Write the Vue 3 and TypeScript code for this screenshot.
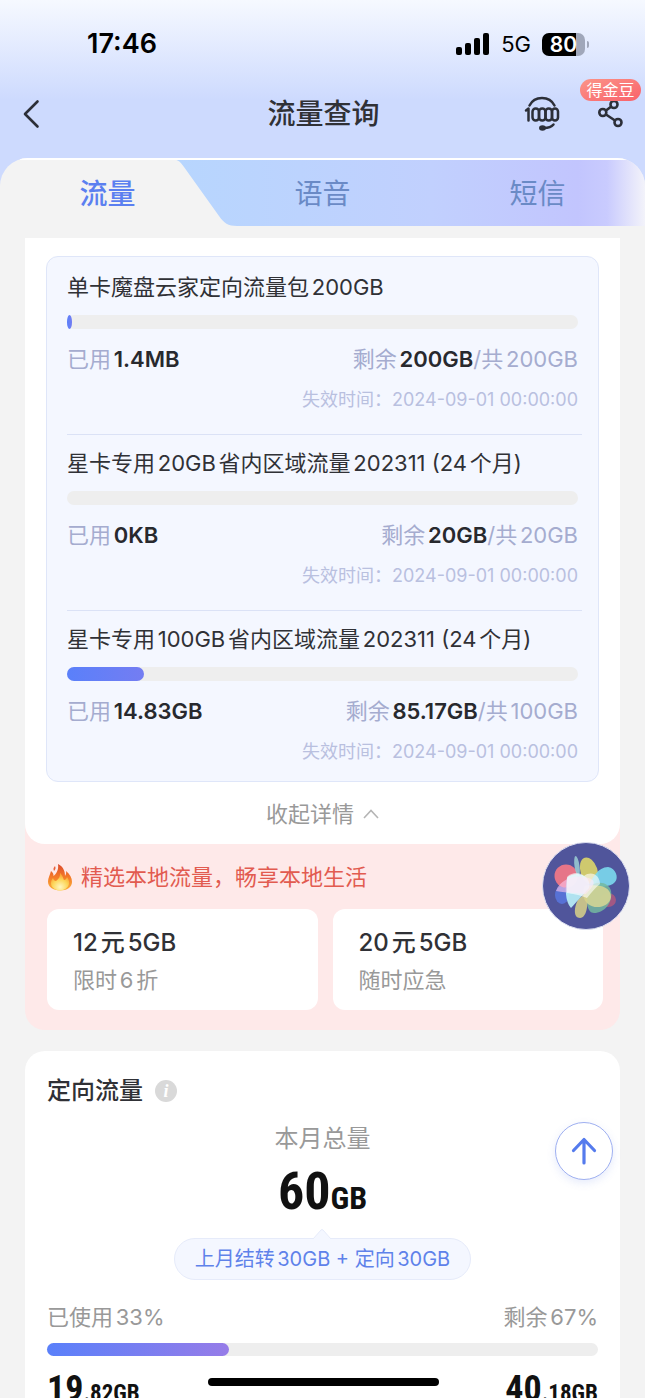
<script setup lang="ts">
interface DataPackage {
  name: string
  used: string
  left: string
  total: string
  expires: string
  percent: number
}

interface Offer {
  title: string
  note: string
}

const packages: DataPackage[] = [
  { name: '单卡魔盘云家定向流量包200GB', used: '1.4MB', left: '200GB', total: '200GB', expires: '2024-09-01 00:00:00', percent: 1 },
  { name: '星卡专用20GB省内区域流量202311 (24个月)', used: '0KB', left: '20GB', total: '20GB', expires: '2024-09-01 00:00:00', percent: 0 },
  { name: '星卡专用100GB省内区域流量202311 (24个月)', used: '14.83GB', left: '85.17GB', total: '100GB', expires: '2024-09-01 00:00:00', percent: 15 },
]

const offers: Offer[] = [
  { title: '12元5GB', note: '限时6折' },
  { title: '20元5GB', note: '随时应急' },
]
</script>

<template>
  <div class="app">
    <div class="status">
      <span class="clock">17:46</span>
      <div class="status-right">
        <svg class="signal" viewBox="0 0 34 22" aria-hidden="true">
          <rect x="0" y="14" width="6" height="8" rx="2" />
          <rect x="9" y="10" width="6" height="12" rx="2" />
          <rect x="18" y="5" width="6" height="17" rx="2" />
          <rect x="27" y="0" width="6" height="22" rx="2" />
        </svg>
        <span class="network">5G</span>
        <span class="battery"><span class="battery-level">80</span></span>
      </div>
    </div>

    <header class="nav">
      <button class="icon-btn back" aria-label="返回">
        <svg width="18" height="30" viewBox="0 0 18 30"><path d="M15.500 2.500 3 15l12.500 12.500" fill="none" stroke="#2c2f38" stroke-width="2.600" stroke-linecap="round" stroke-linejoin="round" /></svg>
      </button>
      <h1>流量查询</h1>
      <div class="nav-actions">
        <button class="icon-btn" aria-label="客服">
          <svg width="36" height="36" viewBox="0 0 36 36" fill="none" stroke="#2c2f38" stroke-width="2.500" stroke-linecap="round" stroke-linejoin="round">
            <path d="M5.500 9.500C8 4.500 12.500 2 18 2S28 4.500 30.500 9.500" />
            <path d="M2 14.500 4.500 12.500V24.500" />
            <rect x="8.500" y="12.500" width="6.500" height="12" rx="3.200" />
            <rect x="15" y="12.500" width="6.500" height="12" rx="3.200" />
            <rect x="21.500" y="12.500" width="6.500" height="12" rx="3.200" />
            <rect x="28" y="12.500" width="6" height="12" rx="3" />
            <path d="M29.500 28.500C27 31.500 23.500 32 20 32" />
            <ellipse cx="18.500" cy="32" rx="2.200" ry="1.500" fill="#2c2f38" />
          </svg>
        </button>
        <button class="icon-btn share" aria-label="分享">
          <svg width="28" height="28" viewBox="0 0 28 28" fill="none" stroke="#2c2f38" stroke-width="2.600">
            <path d="M9 10.500 14.300 6.500M9 14.500 18 20.500" />
            <circle cx="17" cy="4.500" r="3.500" />
            <circle cx="5.800" cy="12.500" r="3.500" />
            <circle cx="21" cy="22.500" r="3.500" />
          </svg>
          <span class="badge">得金豆</span>
        </button>
      </div>
    </header>

    <main class="sheet">
      <nav class="tabs">
        <svg class="tabs-bg" viewBox="0 0 645 68" preserveAspectRatio="none" aria-hidden="true">
          <defs>
            <linearGradient id="tabFill" x1="0" x2="1" y1="0" y2="0">
              <stop offset="0" stop-color="#b7d6fe" />
              <stop offset=".55" stop-color="#c1d0fe" />
              <stop offset=".86" stop-color="#c2c5fe" />
              <stop offset=".92" stop-color="#c9cbfe" />
              <stop offset="1" stop-color="#f3f3fa" />
            </linearGradient>
          </defs>
          <path d="M170 1C177 1 180 3 184 9L219 58C224 65 228 68 237 68H645V1Z" fill="url(#tabFill)" />
          <path d="M20 1H645" stroke="#fff" stroke-width="2" />
        </svg>
        <button class="tab active">流量</button>
        <button class="tab">语音</button>
        <button class="tab">短信</button>
      </nav>

      <section class="card details">
        <ul class="packages">
          <li v-for="p in packages" :key="p.name" class="package">
            <h2>{{ p.name }}</h2>
            <div class="track">
              <div v-if="p.percent" class="fill" :class="{ tiny: p.percent < 2 }" :style="{ width: p.percent + '%' }"></div>
            </div>
            <div class="usage">
              <span>已用<b>{{ p.used }}</b></span>
              <span>剩余<b>{{ p.left }}</b>/共{{ p.total }}</span>
            </div>
            <p class="expires">失效时间：{{ p.expires }}</p>
          </li>
        </ul>
        <button class="collapse">
          收起详情
          <svg width="16" height="10" viewBox="0 0 16 10"><path d="M1 9 8 1.500 15 9" fill="none" stroke="#b5b5b5" stroke-width="1.600" /></svg>
        </button>
      </section>

      <section class="promo">
        <h2>
          <svg width="26" height="28" viewBox="0 0 26 28" aria-hidden="true">
            <defs>
              <linearGradient id="flame" x1="0" x2="0" y1="0" y2="1">
                <stop offset="0" stop-color="#dc4a2d" />
                <stop offset=".5" stop-color="#f47b28" />
                <stop offset="1" stop-color="#fbb33c" />
              </linearGradient>
              <radialGradient id="flameCore" cx=".5" cy=".8" r=".7">
                <stop offset="0" stop-color="#fff6c0" />
                <stop offset=".6" stop-color="#fcd65a" />
                <stop offset="1" stop-color="#f9a235" />
              </radialGradient>
            </defs>
            <path d="M11 1C17 4 18 9 18 13C19 11.500 19.500 10 19 8C23 11 25 15 25 19C25 24 20 27.500 13 27.500S1 24 1 18.500C1 15 3 12 4 8C6 9.500 6.500 11 6.500 13C9 11 12 7 11 1Z" fill="url(#flame)" />
            <path d="M8 3C6.500 4.500 6 6 7 8C8.500 6.500 9 5 8 3Z" fill="#e9603a" />
            <path d="M13 10C16 13 16 15 17 17C18.500 17 19.500 16 20 14C22 17 22.500 19 22 21C21 25 17 27.500 13 27.500S4.500 25 4 21C3.800 18 5 16 6 15C6.500 17 7.500 18 9 18C12 16 13.500 13 13 10Z" fill="url(#flameCore)" />
          </svg>
          精选本地流量，畅享本地生活
        </h2>
        <div class="offers">
          <button v-for="o in offers" :key="o.title" class="offer">
            <strong>{{ o.title }}</strong>
            <span>{{ o.note }}</span>
          </button>
        </div>
      </section>

      <section class="card directed">
        <div class="directed-head">
          <h2>定向流量</h2>
          <button class="info" aria-label="说明">i</button>
        </div>
        <p class="caption">本月总量</p>
        <p class="total">60<small>GB</small></p>
        <p class="bubble">
          <svg width="18" height="10" viewBox="0 0 18 10" aria-hidden="true"><path d="M0 10 8 1Q9 0 10 1L18 10" fill="#f4f7ff" stroke="#e6ebfa" /></svg>
          上月结转30GB + 定向30GB
        </p>
        <div class="shares"><span>已使用33%</span><span>剩余67%</span></div>
        <div class="track large"><div class="fill wide" :style="{ width: '33%' }"></div></div>
        <div class="amounts">
          <span>19<small>.82GB</small></span>
          <span>40<small>.18GB</small></span>
        </div>
      </section>
    </main>

    <button class="orb" aria-label="活动">
      <svg viewBox="0 0 88 88">
        <circle cx="44" cy="44" r="43.500" fill="#50559b" stroke="#dcdff0" />
        <ellipse cx="20" cy="53" rx="7" ry="9" fill="#5874dc" opacity=".9" />
        <circle cx="24" cy="34" r="11.500" fill="#ee7787" opacity=".95" />
        <ellipse cx="66" cy="58" rx="8" ry="7" fill="#b0597f" opacity=".85" />
        <ellipse cx="35" cy="24" rx="2.500" ry="10" fill="#9cd0d4" opacity=".85" transform="rotate(-8 35 24)" />
        <ellipse cx="47" cy="29" rx="8.500" ry="14" fill="#ddd669" opacity=".9" transform="rotate(-18 47 29)" />
        <path d="M45 47C50 36 56 25 66 25C74 26 77 36 73 40C68 46 56 44 45 47Z" fill="#7bd7ed" opacity=".92" />
        <path d="M45 47C54 37 67 40 69 49C71 61 62 71 52 71C45 71 44 60 45 47Z" fill="#73b9a0" opacity=".85" />
        <path d="M43 44C53 42 69 43 69 55C68 65 53 68 46 62C41 58 40 51 43 44Z" fill="#ded994" opacity=".8" />
        <path d="M44 50C47 60 45 76 38 76C31 76 32 65 36 58Z" fill="#d8d288" opacity=".85" />
        <path d="M25 36C32 28 50 32 47 46L29 66C23 60 23 45 25 36Z" fill="#baf2fa" opacity=".9" />
        <path d="M14 49C18 38 31 33 42 35C53 37 56 40 44 52C37 51 26 51 14 49Z" fill="#fbc4ec" opacity=".6" />
        <path d="M25 35C31 29 39 31 42 34C50 28 58 34 58 42C53 46 50 50 45 56C36 52 30 52 25 51Z" fill="#fff" opacity=".6" />
      </svg>
    </button>
    <button class="to-top" aria-label="回到顶部">
      <svg width="26" height="28" viewBox="0 0 26 28"><path d="M13 26V3M2.500 13.500 13 2.500l10.500 11" fill="none" stroke="#557bed" stroke-width="3.200" stroke-linecap="round" stroke-linejoin="round" /></svg>
    </button>
    <div class="home-bar"></div>
  </div>
</template>

<style>
body {
  margin: 0;
  background: #f3f3f3;
}
</style>

<style scoped>
.app {
  position: relative;
  height: 100vh;
  overflow: hidden;
  background: linear-gradient(#f6f9ff 0, #cddafe 100px, #cddafe 200px, #f3f3f3 200px);
  color: #303136;
  font-family: Inter, "Noto Sans CJK SC", sans-serif;
  font-size: 22px;
  line-height: 30px;
  text-autospace: normal;
}
h1, h2, p, ul {
  margin: 0;
  padding: 0;
  font-weight: 400;
  font-size: inherit;
}
ul { list-style: none; }
button {
  margin: 0;
  padding: 0;
  border: 0;
  background: none;
  color: inherit;
  font: inherit;
  text-autospace: inherit;
  cursor: pointer;
}
svg { display: block; }

.status {
  display: flex;
  justify-content: space-between;
  align-items: center;
  height: 88px;
  padding: 0 60px 0 87px;
  color: #000;
}
.clock { font-size: 27px; font-weight: 600; }
.status-right { display: flex; align-items: center; gap: 11px; }
.signal { width: 34px; height: 22px; }
.network { font-size: 22px; }
.battery {
  position: relative;
  width: 43px;
  height: 23px;
  border-radius: 7px;
  background: linear-gradient(90deg, #000 80%, #a0a7ba 80%);
}
.battery::after {
  content: "";
  position: absolute;
  top: 8px;
  right: -4px;
  width: 2px;
  height: 7px;
  border-radius: 0 2px 2px 0;
  background: #a0a7ba;
}
.battery-level {
  display: block;
  color: #fff;
  font-size: 21px;
  font-weight: 600;
  line-height: 23px;
  text-align: center;
}

.nav {
  display: grid;
  grid-template-columns: 1fr auto 1fr;
  align-items: center;
  height: 52px;
  padding: 0 20px 18px 22px;
}
.nav h1 { font-size: 28px; font-weight: 500; line-height: 40px; }
.icon-btn { position: relative; }
.back { justify-self: start; }
.nav-actions { display: flex; justify-content: flex-end; align-items: center; gap: 37px; }
.badge {
  position: absolute;
  top: -21px;
  right: -16px;
  width: 61px;
  border-radius: 11px;
  background: linear-gradient(160deg, #fb9488, #f9626b);
  color: #fff;
  font-size: 16px;
  line-height: 22px;
}

.sheet {
  border-radius: 28px 28px 0 0;
  background: #f3f3f3;
  overflow: hidden;
}
.tabs {
  position: relative;
  display: grid;
  grid-template-columns: repeat(3, 1fr);
  height: 68px;
  margin-bottom: 12px;
}
.tabs-bg { position: absolute; inset: 0; width: 100%; height: 100%; }
.tab {
  position: relative;
  padding-top: 4px;
  color: #6a8ac6;
  font-size: 28px;
  line-height: 40px;
}
.tab.active { color: #5b7ff0; font-weight: 500; }

.card { margin: 0 25px; background: #fff; }
.details {
  position: relative;
  padding: 18px 21px 15px;
  border-radius: 0 0 20px 20px;
}
.packages {
  padding: 2px 16px 0 20px;
  border: 1px solid #dfe6f9;
  border-radius: 12px;
  background: #f4f7ff;
}
.package { padding: 13px 4px 19px 0; border-bottom: 1px solid #dbe2f6; }
.package:last-child { padding-bottom: 14px; border-bottom: 0; }
.track { height: 14px; margin-top: 13px; border-radius: 7px; background: #eee; }
.fill { height: 100%; border-radius: 7px; background: linear-gradient(90deg, #5a80fa, #747df2); }
.fill.tiny { border-radius: 50%; }
.usage { display: flex; justify-content: space-between; margin-top: 15px; color: #a5accf; }
.usage b { color: #28292e; font-weight: 600; }
.expires { margin-top: 11px; color: #b9c0df; font-size: 18px; text-align: right; }
.collapse {
  display: flex;
  justify-content: center;
  align-items: center;
  gap: 9px;
  width: 100%;
  margin-top: 17px;
  color: #999;
}

.promo {
  margin: -20px 25px 0;
  padding: 38px 17px 20px 22px;
  border-radius: 0 0 20px 20px;
  background: #fee9e9;
}
.promo h2 { display: flex; align-items: center; gap: 8px; color: #e25b50; }
.offers { display: grid; grid-template-columns: 1fr 1fr; gap: 15px; margin-top: 17px; }
.offer {
  display: flex;
  flex-direction: column;
  gap: 7px;
  padding: 19px 26px 15px;
  border-radius: 12px;
  background: #fff;
  text-align: left;
}
.offer strong { font-size: 24px; font-weight: 500; }
.offer span { color: #999; }

.directed { margin-top: 21px; padding: 25px 22px; border-radius: 20px; }
.directed-head { display: flex; align-items: center; gap: 12px; }
.directed h2 { font-size: 24px; font-weight: 500; }
.info {
  width: 22px;
  height: 22px;
  border-radius: 50%;
  background: #d9d9d9;
  color: #fff;
  font: italic bold 18px/22px "Liberation Serif", serif;
}
.caption { margin-top: 18px; color: #999; font-size: 24px; text-align: center; }
.total {
  margin-top: 12px;
  color: #111;
  font: 700 52px/52px "Roboto Condensed", "Liberation Sans Narrow", Roboto, sans-serif;
  text-align: center;
}
.total small { font-size: 32px; }
.bubble {
  position: relative;
  width: fit-content;
  margin: 14px auto 0;
  padding: 5px 20px;
  border: 1px solid #e6ebfa;
  border-radius: 22px;
  background: #f4f7ff;
  color: #5f82ea;
  font-size: 20px;
}
.bubble svg { position: absolute; top: -10px; left: 50%; margin-left: -9px; }
.shares { display: flex; justify-content: space-between; margin-top: 22px; color: #999; }
.track.large { height: 13px; margin-top: 11px; }
.fill.wide { background: linear-gradient(90deg, #5a80fa, #967ce8); }
.amounts {
  display: flex;
  justify-content: space-between;
  margin-top: 15px;
  color: #111;
  font: 700 36px/36px "Roboto Condensed", "Liberation Sans Narrow", Roboto, sans-serif;
}
.amounts small { font-size: 23px; }

.orb { position: fixed; right: 15px; bottom: 468px; width: 88px; height: 88px; }
.to-top {
  position: fixed;
  right: 32px;
  bottom: 218px;
  display: grid;
  place-items: center;
  width: 58px;
  height: 58px;
  border: 1px solid #9eaff0;
  border-radius: 50%;
  background: #fff;
  box-shadow: 0 3px 8px rgba(90, 120, 230, 0.15);
}
.home-bar {
  position: fixed;
  bottom: 12px;
  left: 50%;
  width: 231px;
  height: 8px;
  margin-left: -115px;
  border-radius: 4px;
  background: #000;
}
</style>
